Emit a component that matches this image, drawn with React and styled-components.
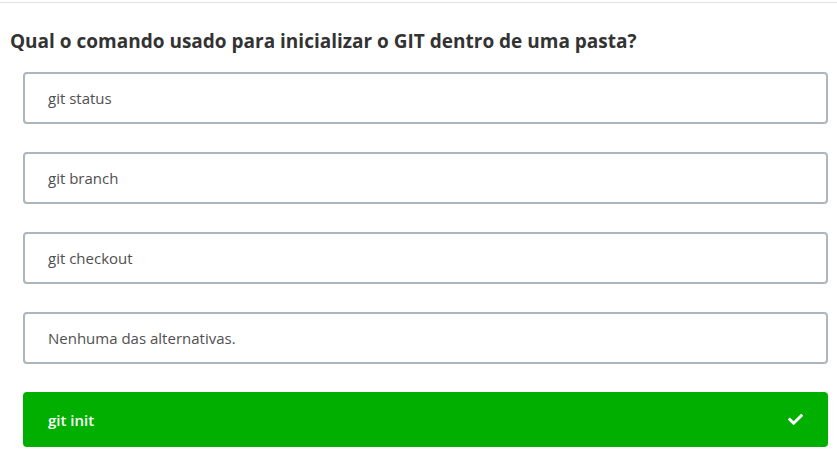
import React from "react";
import styled, { createGlobalStyle } from "styled-components";
import { FaCheck } from "react-icons/fa";

const GlobalStyle = createGlobalStyle`
  body {
    margin: 0;
    background: #fff;
    font-family: "Open Sans", "Noto Sans", sans-serif;
  }
`;

const Page = styled.div`
  width: 837px;
  padding-top: 2px;
`;

const TopRule = styled.div`
  height: 1px;
  background: #dfe2e6;
`;

const Question = styled.h2`
  margin: 0;
  padding: 25px 0 0 10px;
  font-size: 19px;
  line-height: 26px;
  font-weight: 700;
  color: #333;
`;

const Options = styled.div`
  display: flex;
  flex-direction: column;
  gap: 28px;
  margin: 18px 9px 0 23px;
`;

const Option = styled.div`
  display: flex;
  align-items: center;
  justify-content: space-between;
  box-sizing: border-box;
  height: ${(p) => (p.correct ? "55px" : "52px")};
  padding: 0 23px 0 23px;
  border: 2px solid ${(p) => (p.correct ? "#00af00" : "#adb5bd")};
  border-radius: 4px;
  background: ${(p) => (p.correct ? "#00af00" : "#fff")};
  color: ${(p) => (p.correct ? "#fff" : "#505050")};
  font-size: 15px;
  font-weight: ${(p) => (p.correct ? 600 : 400)};
  svg {
    width: 15px;
    height: 15px;
  }
`;

const options = [
  { label: "git status" },
  { label: "git branch" },
  { label: "git checkout" },
  { label: "Nenhuma das alternativas." },
  { label: "git init", correct: true },
];

export default function App() {
  return (
    <>
      <GlobalStyle />
      <Page>
        <TopRule />
        <Question>Qual o comando usado para inicializar o GIT dentro de uma pasta?</Question>
        <Options>
          {options.map((o) => (
            <Option key={o.label} correct={o.correct}>
              <span>{o.label}</span>
              {o.correct && <FaCheck />}
            </Option>
          ))}
        </Options>
      </Page>
    </>
  );
}
